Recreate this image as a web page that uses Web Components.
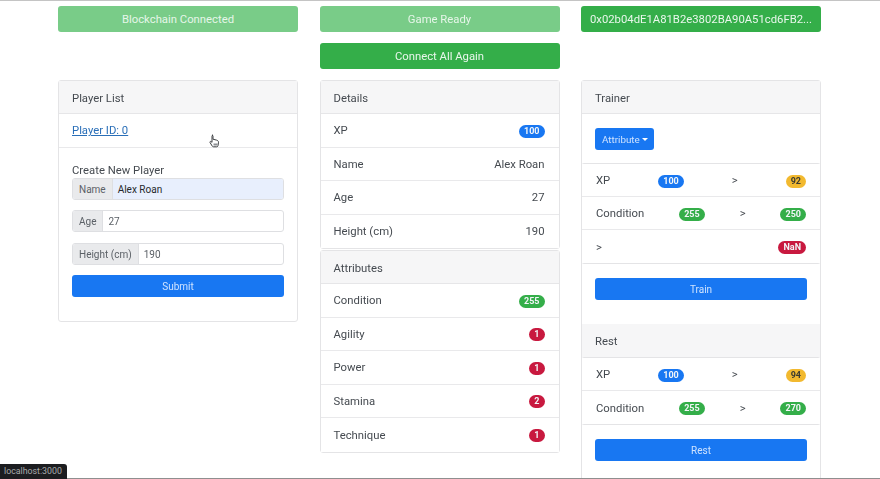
<!DOCTYPE html>
<html lang="en">
<head>
<meta charset="utf-8">
<title>Player Trainer</title>
<style>
  html, body { margin: 0; height: 479px; overflow: hidden; background: #fff; }
  body { font: 11.3px/18px Roboto, "Liberation Sans", Arial, sans-serif; color: #454a50; }
</style>
</head>
<body>
<game-app></game-app>

<script>
/**
 * Solid button. Attributes: color (green, blue), faded.
 */
customElements.define('app-button',
  class extends HTMLElement {
    constructor () {
      super()
      this.attachShadow({ mode: 'open' })
      this.shadowRoot.innerHTML = `
      <style>
      :host {
        display: flex;
        align-items: center;
        justify-content: center;
        box-sizing: border-box;
        height: 26px;
        padding: 1px 9px 0;
        border-radius: 3px;
        color: #e9f7ec;
        background: #34ae49;
        white-space: nowrap;
        overflow: hidden;
      }
      :host([faded]) { background: #79cc88; color: #e6f6e9; }
      :host([color="blue"]) { background: #1877f2; color: #cfe3ff; height: 22px; font-size: 10px; }
      </style>
      <slot></slot>`
    }
  })

/**
 * Pill shaped number. Attribute: color (blue, green, red, yellow).
 */
customElements.define('app-badge',
  class extends HTMLElement {
    constructor () {
      super()
      this.attachShadow({ mode: 'open' })
      this.shadowRoot.innerHTML = `
      <style>
      :host {
        display: inline-block;
        box-sizing: border-box;
        height: 13px;
        min-width: 15px;
        padding: 0 5px;
        border-radius: 7px;
        font-size: 9px;
        font-weight: 700;
        line-height: 13px;
        text-align: center;
        color: #f2f5f8;
      }
      :host([color="blue"]) { background: #1877f2; }
      :host([color="green"]) { background: #34ae49; }
      :host([color="red"]) { background: #c8193f; }
      :host([color="yellow"]) { background: #f2b92f; color: #3a3a30; }
      </style>
      <slot></slot>`
    }
  })

/**
 * List row, its children are spread evenly over the width.
 */
customElements.define('app-row',
  class extends HTMLElement {
    constructor () {
      super()
      this.attachShadow({ mode: 'open' })
      this.shadowRoot.innerHTML = `
      <style>
      :host {
        display: flex;
        align-items: center;
        justify-content: space-between;
        box-sizing: border-box;
        height: 33.5px;
        padding: 2px 14px 0 13px;
        border-bottom: 1px solid #e9e9eb;
        background: #fff;
      }
      :host(:last-child) { border-bottom: 0; }
      </style>
      <slot></slot>`
    }
  })

/**
 * Card with a grey heading from the heading attribute.
 */
customElements.define('app-card',
  class extends HTMLElement {
    constructor () {
      super()
      this.attachShadow({ mode: 'open' })
      this.shadowRoot.innerHTML = `
      <style>
      :host {
        display: block;
        box-sizing: border-box;
        border: 1px solid #e4e4e6;
        border-radius: 3px;
        background: #fff;
      }
      header {
        box-sizing: border-box;
        height: 33px;
        padding: 1px 13px 0;
        line-height: 33px;
        background: #f6f6f7;
        border-bottom: 1px solid #e6e6e8;
      }
      </style>
      <header></header>
      <slot></slot>`
    }

    /**
     * Copies the heading attribute into the header.
     */
    connectedCallback () {
      this.shadowRoot.querySelector('header').textContent = this.getAttribute('heading')
    }
  })

/**
 * Input with a grey label in front. Attributes: label, value, filled.
 */
customElements.define('input-group',
  class extends HTMLElement {
    constructor () {
      super()
      this.attachShadow({ mode: 'open' })
    }

    /**
     * Renders the label and the value.
     */
    connectedCallback () {
      this.shadowRoot.innerHTML = `
      <style>
      :host {
        display: flex;
        box-sizing: border-box;
        height: 22px;
        border: 1px solid #dedfe2;
        border-radius: 3px;
        font-size: 10px;
        line-height: 21px;
        background: #fff;
        overflow: hidden;
      }
      span {
        padding: 0 6px;
        background: #e9eaec;
        border-right: 1px solid #dedfe2;
        color: #5c6167;
      }
      div { padding: 0 5px; flex: 1; color: #5c6167; }
      :host([filled]) div { background: #e8effd; color: #26282b; }
      </style>
      <span>${this.getAttribute('label')}</span>
      <div>${this.getAttribute('value')}</div>`
    }
  })

/**
 * Small dropdown button.
 */
customElements.define('drop-button',
  class extends HTMLElement {
    constructor () {
      super()
      this.attachShadow({ mode: 'open' })
      this.shadowRoot.innerHTML = `
      <style>
      :host {
        display: inline-flex;
        align-items: center;
        vertical-align: top;
        gap: 2px;
        box-sizing: border-box;
        height: 22px;
        padding: 1px 6px 0 7px;
        border-radius: 3px;
        background: #1877f2;
        color: #cfe3ff;
        font-size: 9.8px;
      }
      i { border: 3px solid transparent; border-top-color: #fff; border-bottom: 0; }
      </style>
      <slot></slot><i></i>`
    }
  })

/**
 * Left column with the player list and the form.
 */
customElements.define('player-list',
  class extends HTMLElement {
    constructor () {
      super()
      this.attachShadow({ mode: 'open' })
      this.shadowRoot.innerHTML = `
      <style>
      :host { display: block; }
      a { color: #2a6fb8; text-decoration: underline; }
      form { display: block; padding: 14px 13px 24px; position: relative; }
      h4 { margin: 0; font: inherit; line-height: 17px; margin-bottom: -1px; }
      input-group { margin-bottom: 10.5px; }
      svg { position: absolute; left: 150px; top: -14px; }
      </style>
      <app-card heading="Player List">
        <app-row><a>Player ID: 0</a></app-row>
        <form>
          <svg width="11" height="14" viewBox="0 0 11 14">
            <path d="M3 1.2c.7 0 1 .5 1 1v3l3.5.9c1.2.3 2 1 2 2.1l-.5 3.5c-.1.7-.6 1.1-1.3 1.1H4.500c-.6 0-1-.3-1.300-.8L1 8.500c-.4-.7.5-1.500 1.200-.9l.8.8V2.200c0-.6.3-1 1-1z" fill="#fff" stroke="#3c3f42" stroke-width="1"/>
            <path d="M4.500 9.500h4v2h-4z" fill="#8d9094"/>
          </svg>
          <h4>Create New Player</h4>
          <input-group label="Name" value="Alex Roan" filled></input-group>
          <input-group label="Age" value="27"></input-group>
          <input-group label="Height (cm)" value="190"></input-group>
          <app-button color="blue">Submit</app-button>
        </form>
      </app-card>`
    }
  })

/**
 * Middle column with details and attributes.
 */
customElements.define('player-details',
  class extends HTMLElement {
    constructor () {
      super()
      this.attachShadow({ mode: 'open' })
      this.shadowRoot.innerHTML = `
      <style>
      :host { display: flex; flex-direction: column; gap: 1px; }
      </style>
      <app-card heading="Details">
        <app-row><span>XP</span><app-badge color="blue">100</app-badge></app-row>
        <app-row><span>Name</span><span>Alex Roan</span></app-row>
        <app-row><span>Age</span><span>27</span></app-row>
        <app-row><span>Height (cm)</span><span>190</span></app-row>
      </app-card>
      <app-card heading="Attributes">
        <app-row><span>Condition</span><app-badge color="green">255</app-badge></app-row>
        <app-row><span>Agility</span><app-badge color="red">1</app-badge></app-row>
        <app-row><span>Power</span><app-badge color="red">1</app-badge></app-row>
        <app-row><span>Stamina</span><app-badge color="red">2</app-badge></app-row>
        <app-row><span>Technique</span><app-badge color="red">1</app-badge></app-row>
      </app-card>`
    }
  })

/**
 * Right column with train and rest.
 */
customElements.define('trainer-panel',
  class extends HTMLElement {
    constructor () {
      super()
      this.attachShadow({ mode: 'open' })
      this.shadowRoot.innerHTML = `
      <style>
      :host { display: block; }
      .pad { padding: 14px 13px 13px; }
      .list { border: 1px solid #e4e4e6; border-radius: 3px; margin: 0 -1px; }
      .list app-row { height: 33px; padding: 2px 14px 0; }
      .head { box-sizing: border-box; height: 33px; padding: 1px 13px 0; line-height: 33px; background: #f6f6f7; margin-top: 11px; }
      .bottom { height: 60px; }
      </style>
      <app-card heading="Trainer">
        <div class="pad"><drop-button>Attribute</drop-button></div>
        <div class="list">
          <app-row><span>XP</span><app-badge color="blue">100</app-badge><span>&gt;</span><app-badge color="yellow">92</app-badge></app-row>
          <app-row><span>Condition</span><app-badge color="green">255</app-badge><span>&gt;</span><app-badge color="green">250</app-badge></app-row>
          <app-row><span>&gt;</span><app-badge color="red">NaN</app-badge></app-row>
        </div>
        <div class="pad"><app-button color="blue">Train</app-button></div>
        <div class="head">Rest</div>
        <div class="list">
          <app-row><span>XP</span><app-badge color="blue">100</app-badge><span>&gt;</span><app-badge color="yellow">94</app-badge></app-row>
          <app-row><span>Condition</span><app-badge color="green">255</app-badge><span>&gt;</span><app-badge color="green">270</app-badge></app-row>
        </div>
        <div class="pad"><app-button color="blue">Rest</app-button></div>
        <div class="bottom"></div>
      </app-card>`
    }
  })

/**
 * Page layout.
 */
customElements.define('game-app',
  class extends HTMLElement {
    constructor () {
      super()
      this.attachShadow({ mode: 'open' })
      this.shadowRoot.innerHTML = `
      <style>
      :host {
        display: block;
        box-sizing: border-box;
        height: 479px;
        padding: 5px 59px 0 58px;
        border-top: 1px solid #c4c4c4;
        overflow: hidden;
        position: relative;
      }
      .grid {
        display: grid;
        grid-template-columns: repeat(3, 240px);
        column-gap: 21.5px;
        align-items: start;
        filter: blur(.3px);
      }
      .stack { display: flex; flex-direction: column; gap: 11px; }
      .top { height: 74px; }
      .line { position: absolute; left: 0; right: 0; bottom: 0; height: 1px; background: #8f8f8f; }
      .status {
        position: absolute;
        left: 0;
        bottom: 0;
        padding: 0 5px 0 4px;
        height: 15px;
        line-height: 15px;
        font-size: 8.8px;
        color: #a9abad;
        background: #1c1d20;
        border-top-right-radius: 3px;
      }
      </style>
      <div class="grid">
        <div class="top"><app-button faded>Blockchain Connected</app-button></div>
        <div class="top stack"><app-button faded>Game Ready</app-button><app-button>Connect All Again</app-button></div>
        <div class="top"><app-button>0x02b04dE1A81B2e3802BA90A51cd6FB2...</app-button></div>
        <player-list></player-list>
        <player-details></player-details>
        <trainer-panel></trainer-panel>
      </div>
      <div class="line"></div>
      <div class="status">localhost:3000</div>`
    }
  })
</script>
</body>
</html>
